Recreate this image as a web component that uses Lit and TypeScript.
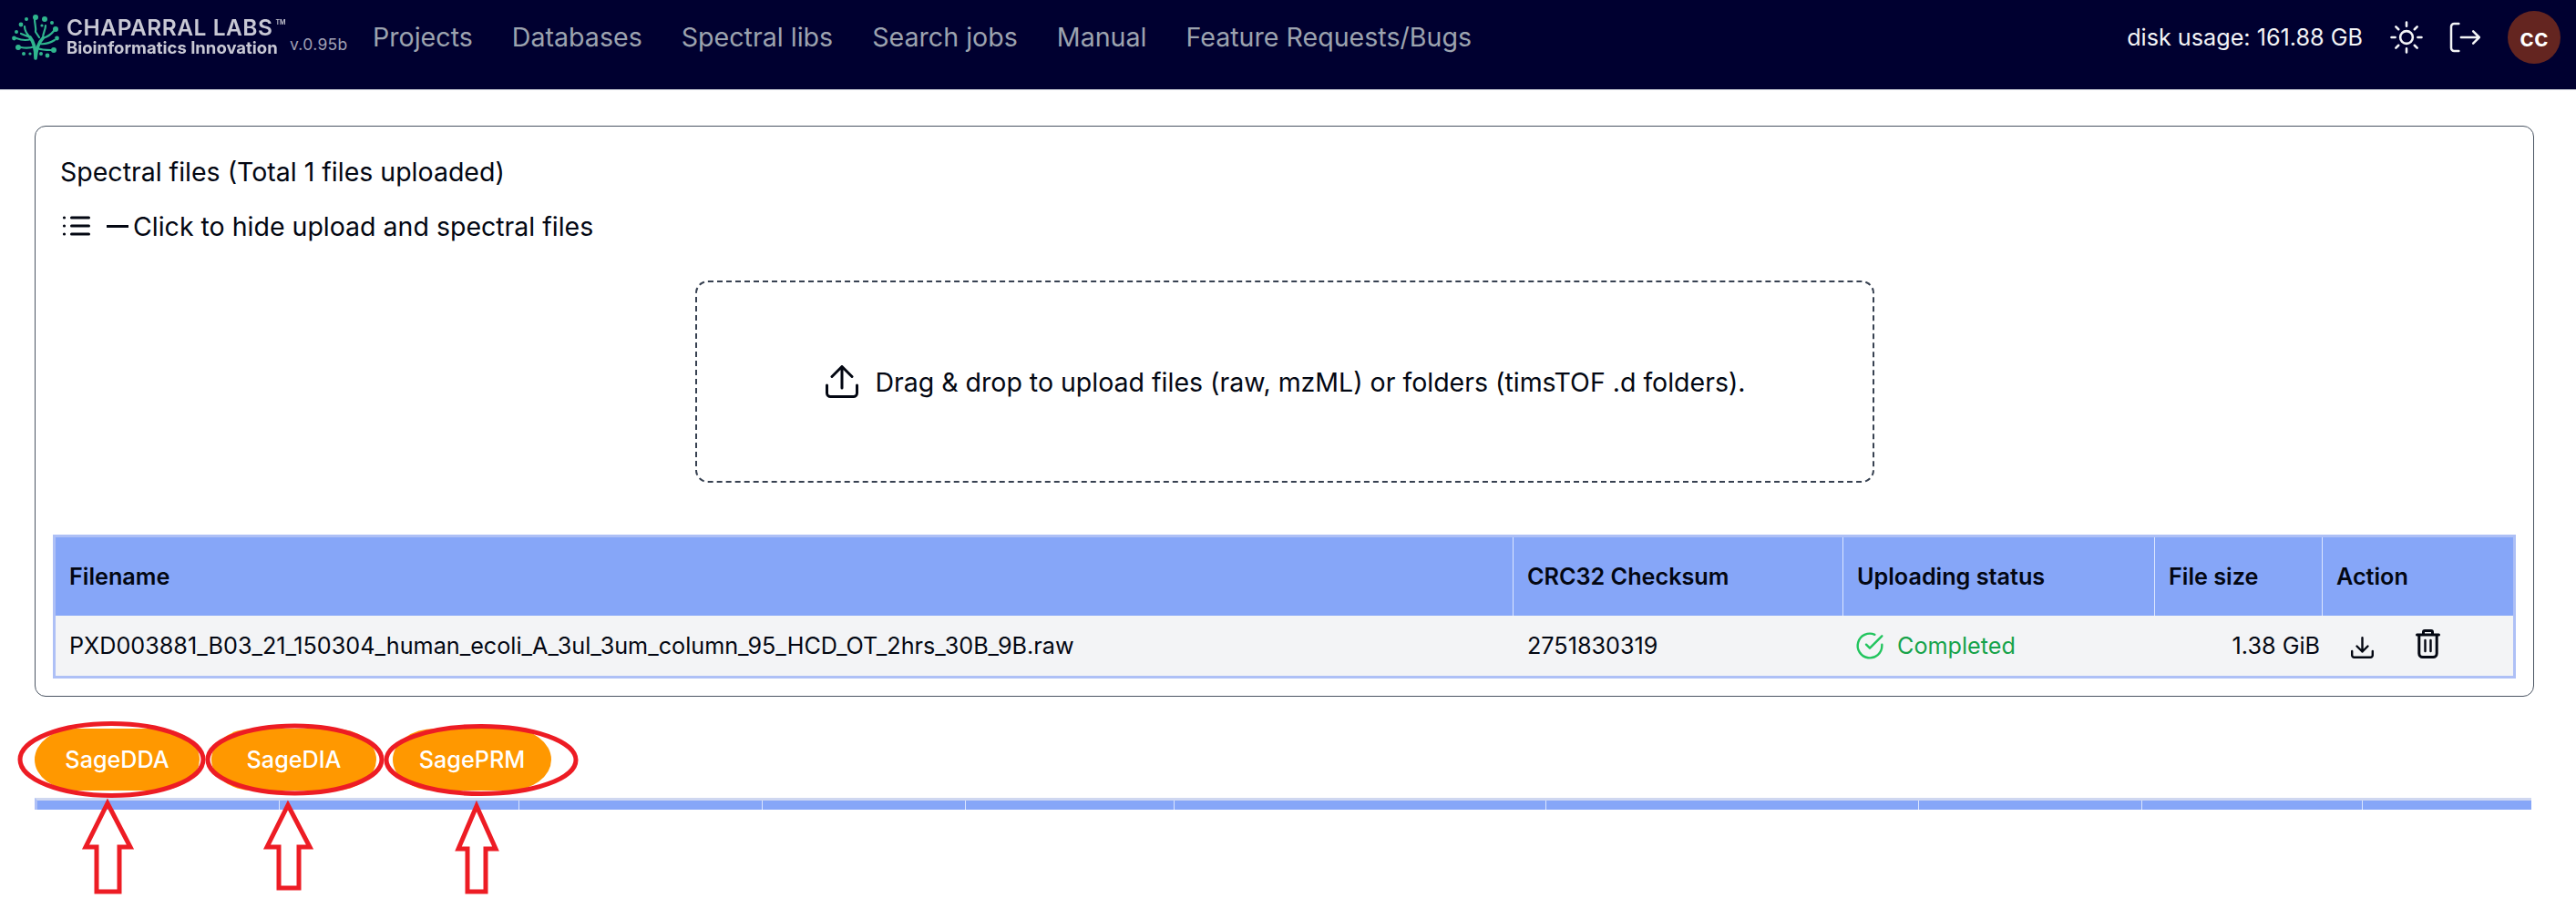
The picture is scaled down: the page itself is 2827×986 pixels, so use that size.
import { LitElement, html, css, svg } from "lit";
import { customElement } from "lit/decorators.js";

const NAV = ["Projects", "Databases", "Spectral libs", "Search jobs", "Manual", "Feature Requests/Bugs"];
const LOWER_COLS = 10;

const treeLogo = svg`
  <g fill="none" stroke="#2fb58e" stroke-width="2.200" stroke-linecap="round">
    <path stroke-width="3.600" d="M26 49 C26 40 25 32 20 26 M26 49 C27 38 29 32 34 27"/>
    <path d="M20 26 C16 22 14 19 14 14 M20 26 L10 22 M21 28 C15 30 10 29 5 27 M25 36 C20 38 15 38 10 37 M34 27 C34 21 37 18 37 13 M34 27 C40 25 43 23 46 19 M31 33 C37 34 42 32 47 29 M28 38 C33 40 38 40 43 40 M26 20 C27 16 25 12 25 6 M26 20 L30 26"/>
  </g>
  <g fill="#2fb58e">
    <circle cx="26" cy="4" r="3"/><circle cx="16" cy="6" r="2"/><circle cx="36" cy="6" r="3"/><circle cx="44" cy="10" r="2"/>
    <circle cx="10" cy="12" r="2.400"/><circle cx="5" cy="20" r="2"/><circle cx="48" cy="17" r="3"/><circle cx="2.500" cy="27" r="2.400"/>
    <circle cx="49.500" cy="27" r="2.400"/><circle cx="7" cy="37" r="3"/><circle cx="46" cy="40" r="3"/><circle cx="13" cy="44" r="2"/>
    <circle cx="39" cy="46" r="2.400"/><circle cx="20" cy="44" r="1.600"/><circle cx="32" cy="44" r="2"/><circle cx="33" cy="13" r="1.600"/>
  </g>`;

@customElement("app-root")
export class AppRoot extends LitElement {
  static styles = css`
    :host {
      display: block;
      position: relative;
      height: 986px;
      overflow: hidden;
      background: #fff;
      color: #030712;
      font-family: Inter, "Liberation Sans", sans-serif;
    }
    * { box-sizing: border-box; }
    .top {
      height: 99px;
      background: #000030;
      border-bottom: 1px solid #d1d5db;
      display: flex;
      align-items: center;
      padding: 0 17px 16px 13px;
    }
    .brand { display: flex; align-items: center; gap: 8px; width: 396px; flex: none; margin-top: 15px; }
    .tree { width: 52px; height: 52px; flex: none; margin-top: -15px; }
    .brand-text { width: 237px; flex: none; color: #c8c8d4; margin-top: -17px; filter: blur(0.3px); }
    .brand-name { font: 600 24.500px/24px Inter, sans-serif; letter-spacing: 0.5px; white-space: nowrap; }
    .brand-name sup { font-size: 7px; line-height: 0; vertical-align: 12px; margin-left: 3px; letter-spacing: 0; }
    .brand-sub { font: 700 18.500px/20px Inter, sans-serif; white-space: nowrap; }
    .version { font-size: 17.500px; color: #a1a1b5; letter-spacing: 0.3px; }
    nav { display: flex; gap: 43px; font-size: 28.600px; color: #9ca3af; line-height: 42px; }
    .spacer { flex: 1; }
    .disk { font-size: 25.200px; color: #f3f4f6; white-space: nowrap; }
    .icon-btn { display: flex; flex: none; color: #f3f4f6; }
    .sun { width: 44px; height: 44px; margin-left: 26px; }
    .logout { width: 40px; height: 40px; margin-left: 22px; }
    .avatar {
      width: 58px; height: 58px; border-radius: 50%;
      background: #642520; color: #fff;
      display: flex; align-items: center; justify-content: center;
      font-size: 27px; font-weight: 600; margin-left: 27px; flex: none;
    }
    main { padding: 39px 46px 0 38px; }
    .card {
      border: 1px solid #4b5563;
      border-radius: 12px;
      padding: 29px 19px 19px 19px;
    }
    .line { font-size: 28.500px; line-height: 42px; padding-left: 8px; white-space: nowrap; }
    .toggle { display: flex; align-items: center; margin-top: 18px; }
    .toggle svg { flex: none; }
    .list-icon { width: 32px; height: 24px; margin-left: 1px; margin-top: -2px; }
    .dash { width: 24px; height: 3px; background: #030712; margin: -2px 5px 0 18px; flex: none; }
    .drop {
      margin: 38px auto 0;
      width: 1294px; height: 222px;
      border: 2px dashed #374151;
      border-radius: 14px;
      display: flex; align-items: center; justify-content: center;
      gap: 18px;
      padding-left: 3px;
      font-size: 28.500px;
    }
    .drop svg { width: 36px; height: 36px; flex: none; }
    table {
      margin-top: 57px;
      width: 2703px;
      table-layout: fixed;
      border-collapse: separate;
      border-spacing: 0;
      border: 3px solid #aec0f6;
      font-size: 25.200px;
    }
    th {
      background: #86a6f8;
      height: 86px;
      text-align: left;
      font-weight: 600;
      padding: 0 14px 0 15px;
      border-right: 1px solid #dbe5fd;
    }
    th:last-child { border-right: none; }
    td { background: #f3f4f6; height: 66px; padding: 0 15px; white-space: nowrap; }
    .size { text-align: right; padding-right: 3px; }
    .status { display: flex; align-items: center; gap: 14px; color: #16a34a; margin-left: -2px; }
    .status svg { width: 32px; height: 32px; color: #22c55e; flex: none; }
    .actions { display: flex; align-items: flex-end; height: 32px; margin: -4px 0 0 16px; gap: 46px; }
    .dl { width: 25px; height: 24px; flex: none; }
    .trash { width: 27px; height: 32px; flex: none; }
    .pills { display: flex; margin-top: 35px; height: 68px; }
    .pill {
      background: #ff9800; color: #fff;
      border-radius: 46px / 34px;
      display: flex; align-items: center; justify-content: center;
      font-size: 25.200px; font-weight: 500;
    }
    .p1 { width: 181px; }
    .p2 { width: 181px; margin-left: 13px; }
    .p3 { width: 174px; margin-left: 18px; }
    .lower {
      margin-top: 8px;
      width: 2740px;
      height: 13px;
      border-top: 3px solid #cfd7f0;
      border-left: 3px solid #aec0f6;
      background: #86a6f8;
      display: grid;
      grid-template-columns: 266px 263px 267px 223px 229px 408px 409px 245px 242px 185px;
    }
    .lower div { border-right: 1px solid #dbe5fd; }
    .lower div:last-child { border-right: none; }
    .marks { position: absolute; left: 0; top: 0; width: 2827px; height: 986px; pointer-events: none; }
  `;

  render() {
    return html`
      <header class="top">
        <div class="brand">
          <svg class="tree" viewBox="0 0 52 52">${treeLogo}</svg>
          <div class="brand-text">
            <div class="brand-name">CHAPARRAL LABS<sup>TM</sup></div>
            <div class="brand-sub">Bioinformatics Innovation</div>
          </div>
          <span class="version">v.0.95b</span>
        </div>
        <nav>${NAV.map((n) => html`<span>${n}</span>`)}</nav>
        <div class="spacer"></div>
        <span class="disk">disk usage: 161.88 GB</span>
        <svg class="icon-btn sun" viewBox="0 0 24 24" fill="none" stroke="currentColor" stroke-width="1.400" stroke-linecap="round" stroke-linejoin="round">
          <path d="M12 3v2.250m6.364.386-1.591 1.591M21 12h-2.250m-.386 6.364-1.591-1.591M12 18.750V21m-4.773-4.227-1.591 1.591M5.250 12H3m4.227-4.773L5.636 5.636M15.750 12a3.750 3.750 0 1 1-7.500 0 3.750 3.750 0 0 1 7.500 0Z"/>
        </svg>
        <svg class="icon-btn logout" viewBox="0 0 24 24" fill="none" stroke="currentColor" stroke-width="1.500" stroke-linecap="round" stroke-linejoin="round">
          <path d="M8 3H5A2 2 0 0 0 3 5v14a2 2 0 0 0 2 2h3M9.500 12h12m0 0-4-4m4 4-4 4"/>
        </svg>
        <div class="avatar">cc</div>
      </header>
      <main>
        <section class="card">
          <div class="line">Spectral files (Total 1 files uploaded)</div>
          <div class="line toggle">
            <svg class="list-icon" viewBox="0 0 32 24" fill="none" stroke="currentColor" stroke-width="3" stroke-linecap="round">
              <path d="M11.500 3H30.500M11.500 12H30.500M11.500 21H30.500"/>
              <path stroke-width="3.200" d="M3.500 3h.01M3.500 12h.01M3.500 21h.01"/>
            </svg>
            <span class="dash"></span>
            <span>Click to hide upload and spectral files</span>
          </div>
          <div class="drop">
            <svg viewBox="0 0 36 36" fill="none" stroke="currentColor" stroke-width="3" stroke-linecap="round" stroke-linejoin="round">
              <path d="M1.500 22V30.500a4 4 0 0 0 4 4H30.500a4 4 0 0 0 4-4V22M18 25V2M7 12.500 18 1.500 29 12.500"/>
            </svg>
            <span>Drag &amp; drop to upload files (raw, mzML) or folders (timsTOF .d folders).</span>
          </div>
          <table>
            <colgroup>
              <col style="width:1600px" /><col style="width:362px" /><col style="width:342px" /><col style="width:184px" /><col />
            </colgroup>
            <thead>
              <tr><th>Filename</th><th>CRC32 Checksum</th><th>Uploading status</th><th>File size</th><th>Action</th></tr>
            </thead>
            <tbody>
              <tr>
                <td>PXD003881_B03_21_150304_human_ecoli_A_3ul_3um_column_95_HCD_OT_2hrs_30B_9B.raw</td>
                <td>2751830319</td>
                <td>
                  <div class="status">
                    <svg viewBox="0 0 24 24" fill="none" stroke="currentColor" stroke-width="1.800" stroke-linecap="round" stroke-linejoin="round">
                      <path d="M22 11.080V12a10 10 0 1 1-5.930-9.140"/><path d="M22 4 12 14.010l-3-3"/>
                    </svg>
                    <span>Completed</span>
                  </div>
                </td>
                <td class="size">1.38 GiB</td>
                <td>
                  <div class="actions">
                    <svg class="dl" viewBox="0 0 25 24" fill="none" stroke="currentColor" stroke-width="2.400" stroke-linecap="round" stroke-linejoin="round">
                      <path d="M1.200 16V20.500a2.300 2.300 0 0 0 2.300 2.300H21.500a2.300 2.300 0 0 0 2.300-2.300V16M12.500 1.200V16.500M6.500 10.500 12.500 16.500 18.500 10.500"/>
                    </svg>
                    <svg class="trash" viewBox="0 0 27 32" fill="none" stroke="currentColor" stroke-width="3" stroke-linecap="round" stroke-linejoin="round">
                      <path d="M1.500 6H25.500M8.500 5.500V3a1.500 1.500 0 0 1 1.500-1.500h7A1.500 1.500 0 0 1 18.500 3V5.500M3.800 6V26.500a4 4 0 0 0 4 4H19.200a4 4 0 0 0 4-4V6"/>
                      <path stroke-width="2.400" d="M10.500 12V24M16.500 12V24"/>
                    </svg>
                  </div>
                </td>
              </tr>
            </tbody>
          </table>
        </section>
        <div class="pills">
          <div class="pill p1">SageDDA</div>
          <div class="pill p2">SageDIA</div>
          <div class="pill p3">SagePRM</div>
        </div>
        <div class="lower">${Array.from({ length: LOWER_COLS }, () => html`<div></div>`)}</div>
      </main>
      <svg class="marks" viewBox="0 0 2827 986" fill="none" stroke="#ed1c24" stroke-width="5">
        <ellipse cx="122.500" cy="834" rx="100.500" ry="39.500"/>
        <ellipse cx="323.500" cy="834" rx="95.500" ry="37"/>
        <ellipse cx="528" cy="834.500" rx="104" ry="37"/>
        <path d="M118 882 L143 930 H131 V979 H106 V930 H94 Z"/>
        <path d="M316 884 L340 930 H328 V975 H306 V930 H293 Z"/>
        <path d="M523 885 L544 932 H533 V979 H513 V932 H503 Z"/>
      </svg>
    `;
  }
}
